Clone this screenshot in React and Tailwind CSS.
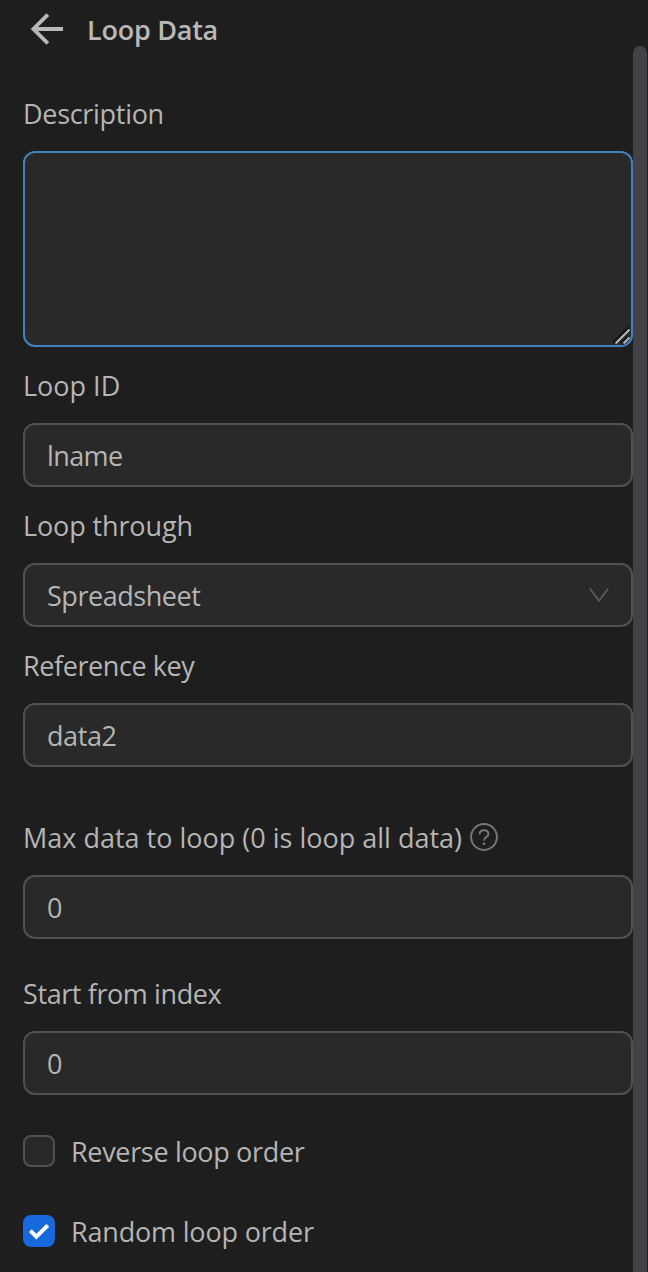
function Label({ className = "", children }) {
  return (
    <span className={`block h-11 whitespace-nowrap pt-px text-[27px] leading-[44px] text-[#b5b5b5] ${className}`}>
      {children}
    </span>
  );
}

function Field({ value, spacing = "", children }) {
  return (
    <div className="flex h-16 items-center justify-between rounded-xl border-2 border-[#505050] bg-[#292929] px-[22px]">
      <span className={`pt-0.5 text-[27px] leading-[44px] text-[#b5b5b5] ${spacing}`}>{value}</span>
      {children}
    </div>
  );
}

function Group({ className = "", label, children }) {
  return (
    <div className={`flex flex-col gap-4 ${className}`}>
      {label}
      {children}
    </div>
  );
}

export default function App() {
  return (
    <div className="relative h-[1272px] w-[648px] overflow-hidden bg-[#1e1e1e] font-['Open_Sans','Noto_Sans',sans-serif]">
      <header className="flex h-[59px] items-center pl-[30px]">
        <svg className="mb-0.5 h-[34px] w-[34px]" viewBox="0 0 34 34" fill="none" stroke="#b8b8b8" strokeWidth="3.8">
          <path d="M33 17H3.5M17.8 2.6L3.4 17L17.8 31.4" />
        </svg>
        <h1 className="ml-[23px] whitespace-nowrap text-[27px] leading-[44px] font-semibold tracking-[-0.25px] text-[#b8b8b8]">
          Loop Data
        </h1>
      </header>

      <main className="flex w-[633px] flex-col pt-8 pl-[23px]">
        <Group label={<Label className="tracking-[-0.3px]">Description</Label>}>
          <div className="flex h-[196px] items-end justify-end rounded-xl border-2 border-[#4280c0] bg-[#292929]">
            <svg className="h-5 w-5" viewBox="0 0 20 20" fill="none">
              <path d="M3 18L18 3M11 19L18 12" stroke="#141414" strokeWidth="4" />
              <path d="M4.5 18.5L18.5 4.5M12.5 18.5L18.5 12.5" stroke="#b9b9b9" strokeWidth="2" />
            </svg>
          </div>
        </Group>
        <Group className="mt-4" label={<Label>Loop ID</Label>}>
          <Field value="lname" spacing="tracking-[-0.6px]" />
        </Group>
        <Group className="mt-4" label={<Label className="tracking-[-0.12px]">Loop through</Label>}>
          <Field value="Spreadsheet" spacing="tracking-[-0.45px]">
            <svg className="h-5 w-5" viewBox="0 0 20 20" fill="none" stroke="#5c5c5c" strokeWidth="1.8">
              <path d="M0.8 3.5L10 15.8L19.2 3.5" />
            </svg>
          </Field>
        </Group>
        <Group className="mt-4" label={<Label className="tracking-[-0.42px]">Reference key</Label>}>
          <Field value="data2" spacing="tracking-[-0.4px]" />
        </Group>
        <Group
          className="mt-12"
          label={
            <div className="flex items-center">
              <Label>Max data to loop (0 is loop all data)</Label>
              <svg className="ml-2 h-7 w-7" viewBox="0 0 28 28" fill="none" stroke="#777777" strokeWidth="2">
                <circle cx="14" cy="14" r="12.9" />
                <path d="M9.6 11.3C9.6 8.8 11.4 7.3 14 7.3S18.4 8.9 18.4 11.2C18.4 14.2 14 14.2 14 17.6" />
                <circle cx="14" cy="20.7" r="1.3" fill="#777777" stroke="none" />
              </svg>
            </div>
          }
        >
          <Field value="0" />
        </Group>
        <Group className="mt-8" label={<Label className="tracking-[-0.4px]">Start from index</Label>}>
          <Field value="0" />
        </Group>
        <div className="mt-[34px] flex items-center gap-4">
          <span className="h-8 w-8 rounded-lg border-2 border-[#505050] bg-[#292929]" />
          <Label className="tracking-[-0.33px]">Reverse loop order</Label>
        </div>
        <div className="mt-9 flex items-center gap-4">
          <span className="flex h-8 w-8 items-center justify-center rounded-lg bg-[#1668dc]">
            <svg className="h-8 w-8" viewBox="0 0 32 32" fill="none" stroke="#ffffff" strokeWidth="4">
              <path d="M7.4 15.6L13.4 21.6L24.8 10.4" />
            </svg>
          </span>
          <Label className="tracking-[-0.18px]">Random loop order</Label>
        </div>
      </main>

      <div className="absolute top-[46px] right-[1px] -bottom-4 w-[14px] rounded-full bg-[#424146]" />
    </div>
  );
}
